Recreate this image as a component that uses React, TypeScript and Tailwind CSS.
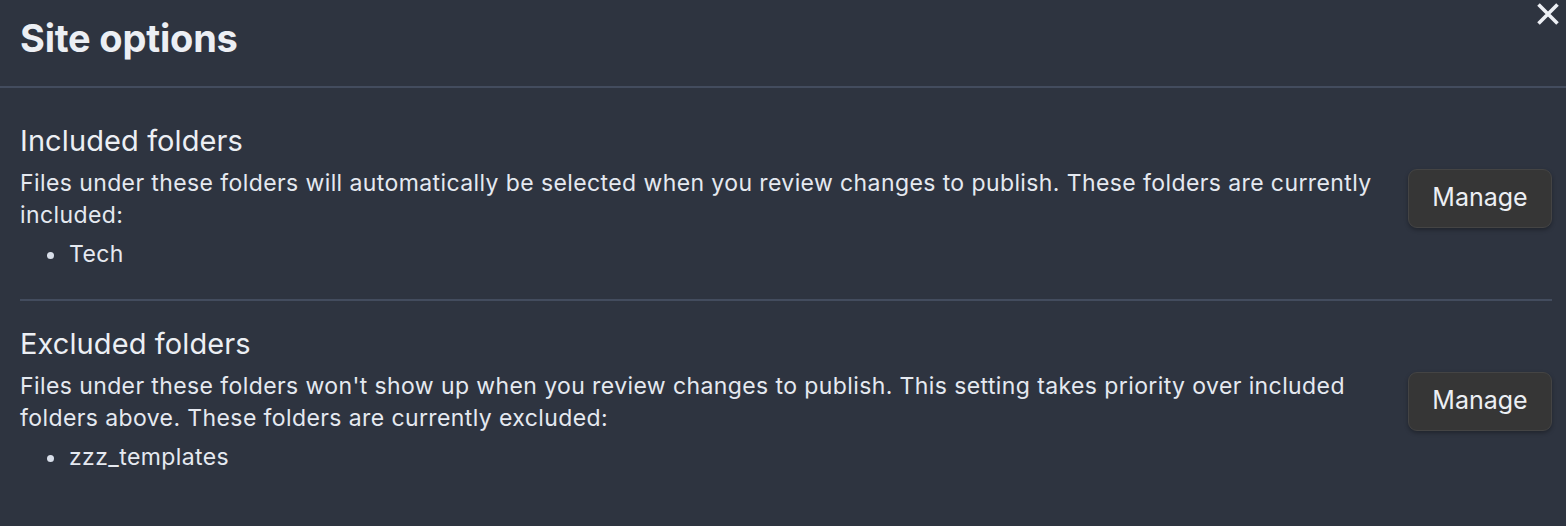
interface FolderSection {
  title: string;
  description: string;
  folders: string[];
}

const sections: FolderSection[] = [
  {
    title: "Included folders",
    description:
      "Files under these folders will automatically be selected when you review changes to publish. These folders are currently included:",
    folders: ["Tech"],
  },
  {
    title: "Excluded folders",
    description:
      "Files under these folders won't show up when you review changes to publish. This setting takes priority over included folders above. These folders are currently excluded:",
    folders: ["zzz_templates"],
  },
];

function SettingRow({ section }: { section: FolderSection }) {
  return (
    <div className="flex items-center gap-6">
      <div className="flex-1 min-w-0">
        <h3 className="text-[29px] leading-[38px] tracking-[0.1px] text-[#eceff4]">{section.title}</h3>
        <p className="mt-[7px] text-[23px] leading-[32px] tracking-[0.4px] text-[#e5e9f0]">
          {section.description}
        </p>
        <ul className="mt-[7px]">
          {section.folders.map((folder) => (
            <li
              key={folder}
              className="flex items-center pl-[27px] text-[23px] leading-[32px] tracking-[0.4px] text-[#e5e9f0]"
            >
              <span className="mr-[15px] mt-[3px] h-[7px] w-[7px] rounded-full bg-[#d8dee9]" />
              {folder}
            </li>
          ))}
        </ul>
      </div>
      <button className="mt-[4px] flex h-[59px] w-[144px] shrink-0 items-center justify-center rounded-[9px] border border-[#444] bg-[#363636] text-[25px] text-[#eceff4] shadow-[0_2px_4px_rgba(0,0,0,0.3)]">
        Manage
      </button>
    </div>
  );
}

export default function App() {
  return (
    <div className="relative min-h-screen bg-[#2e3440] font-['Inter',sans-serif]">
      {/* close button */}
      <button className="absolute right-[6px] top-[2px] text-[#eceff4]">
        <svg width="24" height="24" viewBox="0 0 24 24" fill="none" stroke="currentColor" strokeWidth="3.6">
          <path d="M2.5 2.5 21.5 21.5M21.5 2.5 2.5 21.5" />
        </svg>
      </button>

      <div className="flex h-[88px] items-start border-b-2 border-[#434c5e] px-5 pt-[14px]">
        <h2 className="text-[38px] font-bold leading-[48px] tracking-[-0.2px] text-[#eceff4]">Site options</h2>
      </div>

      <div className="pl-5 pr-[14px]">
        <div className="pb-[29px] pt-[34px]">
          <SettingRow section={sections[0]} />
        </div>
        <div className="h-[2px] bg-[#434c5e]" />
        <div className="pt-[24px]">
          <SettingRow section={sections[1]} />
        </div>
      </div>
    </div>
  );
}
